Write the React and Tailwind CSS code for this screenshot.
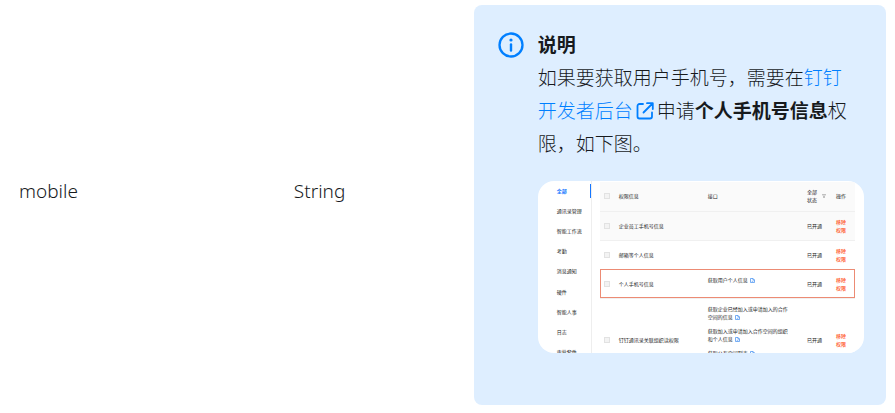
const rows = [
  { name: '企业员工手机号信息', apis: [], tone: 'bg-[#fafafa]', height: 'h-[29px]' },
  { name: '邮箱等个人信息', apis: [], tone: 'bg-white', height: 'h-[29px]' },
  {
    name: '个人手机号信息',
    apis: ['获取用户个人信息'],
    tone: 'bg-white outline-1 -outline-offset-1 outline-[#ec8b74]',
    height: 'h-[29px]',
  },
  {
    name: '钉钉通讯录关联组织读权限',
    apis: [
      '获取企业已经加入或申请加入的合作空间的信息',
      '获取加入或申请加入合作空间的组织和个人信息',
      '获取公有空间列表',
    ],
    tone: 'bg-white',
    height: 'h-[84px]',
  },
];

const menu = ['全部', '通讯录管理', '智能工作流', '考勤', '消息通知', '硬件', '智能人事', '日志', '审批套件'];

function InfoIcon() {
  return (
    <svg className="size-[26px] shrink-0" viewBox="0 0 26 26" fill="none" aria-hidden="true">
      <circle cx="13" cy="13" r="11.5" stroke="#007fff" strokeWidth="2.3" />
      <circle cx="13" cy="8" r="1.6" fill="#007fff" />
      <path d="M13 12.500v6" stroke="#007fff" strokeWidth="2.4" strokeLinecap="round" />
    </svg>
  );
}

function ExternalIcon() {
  return (
    <svg className="mx-[3px] inline-block size-[18px] align-[-2px]" viewBox="0 0 18 18" fill="none" stroke="#007fff" strokeWidth="1.8" strokeLinecap="round" strokeLinejoin="round" aria-hidden="true">
      <path d="M7 2H3.500A2 2 0 0 0 1.500 4v10.500a2 2 0 0 0 2 2H14a2 2 0 0 0 2-2V10.500" />
      <path d="M11 1.200h5.800V7M16.500 1.500L7.500 10.500" />
    </svg>
  );
}

function DocIcon() {
  return (
    <svg className="ml-[2px] inline-block size-[5px] align-[-1px]" viewBox="0 0 10 10" fill="none" stroke="#4a93f0" strokeWidth="1.5" aria-hidden="true">
      <path d="M1 1h5l3 3v5H1zM6 1v3h3M3.500 6.500h3" />
    </svg>
  );
}

function Filter() {
  return (
    <svg className="size-[4px]" viewBox="0 0 8 8" fill="none" stroke="#999" strokeWidth="1.200" aria-hidden="true">
      <path d="M.5 1h7L5 4v3.500H3V4z" />
    </svg>
  );
}

function Check({ label }) {
  return (
    <input
      type="checkbox"
      aria-label={label}
      className="block size-[6px] appearance-none border border-[#e2e2e2] bg-[#f3f3f3]"
    />
  );
}

function PermissionPanel() {
  return (
    <div className="flex h-[172px] overflow-hidden rounded-2xl bg-white text-[5px] leading-[8px] font-normal text-[#222]">
      <nav className="flex h-[181px] w-[54px] shrink-0 flex-col border-r border-[#eee]">
        {menu.map((item, i) => (
          <a key={item} href="#" className="flex flex-1 items-center justify-between pl-[19px]">
            {i === 0 ? (
              <>
                <span className="font-bold text-[#1677ff]">{item}</span>
                <span className="h-[14px] w-px bg-[#1677ff]" />
              </>
            ) : (
              item
            )}
          </a>
        ))}
      </nav>
      <div className="ml-2 mt-px min-w-0 flex-1 pr-[9px]">
        <table className="w-full table-fixed border-collapse text-left">
          <colgroup>
            <col className="w-[19px]" />
            <col className="w-[89px]" />
            <col />
            <col className="w-[29px]" />
            <col className="w-[19px]" />
          </colgroup>
          <thead>
            <tr className="h-[29px] border-b border-[#f0f0f0] bg-[#fafafa]">
              <th className="pl-[4px]"><Check label="全选" /></th>
              <th className="font-normal">权限信息</th>
              <th className="font-normal">接口</th>
              <th className="font-normal">
                <span className="flex items-center gap-[4px]">
                  <span className="w-[11px]">全部状态</span>
                  <Filter />
                </span>
              </th>
              <th className="font-normal">操作</th>
            </tr>
          </thead>
          <tbody>
            {rows.map((row) => (
              <tr key={row.name} className={`border-b border-[#f0f0f0] ${row.tone} ${row.height}`}>
                <td className="pl-[4px]"><Check label={row.name} /></td>
                <td>{row.name}</td>
                <td className="pt-[6px] align-top">
                  <div className="flex w-[84px] flex-col gap-[6px]">
                    {row.apis.map((api) => (
                      <p key={api}>
                        {api}
                        <DocIcon />
                      </p>
                    ))}
                  </div>
                </td>
                <td>已开通</td>
                <td>
                  <button type="button" className="block w-[11px] text-left font-medium text-[#ff5219]">移除权限</button>
                </td>
              </tr>
            ))}
          </tbody>
        </table>
      </div>
    </div>
  );
}

export default function App() {
  return (
    <main className="bg-white px-[9px] py-[5px] font-['Noto_Sans','Noto_Sans_CJK_SC',sans-serif] text-[19px] leading-[28px] font-light text-[#171a1d]">
      <table className="w-full table-fixed border-collapse">
        <colgroup>
          <col className="w-[31%]" />
          <col className="w-[22%]" />
          <col />
        </colgroup>
        <tbody>
          <tr>
            <td className="pb-7 pl-[10px]">mobile</td>
            <td className="pb-7 pl-[13px]">String</td>
            <td>
              <section className="flex gap-[14px] rounded-lg bg-[#deeeff] pt-6 pr-[22px] pb-[52px] pl-6">
                <div className="pt-[3px]"><InfoIcon /></div>
                <div className="min-w-0 flex-1 leading-[33px]">
                  <h2 className="font-bold">说明</h2>
                  <p className="mb-[20px] pr-2">
                    如果要获取用户手机号，需要在
                    <a href="#" className="text-[#007fff]">钉钉开发者后台<ExternalIcon /></a>
                    申请<strong className="font-bold">个人手机号信息</strong>权限，如下图。
                  </p>
                  <PermissionPanel />
                </div>
              </section>
            </td>
          </tr>
        </tbody>
      </table>
    </main>
  );
}
